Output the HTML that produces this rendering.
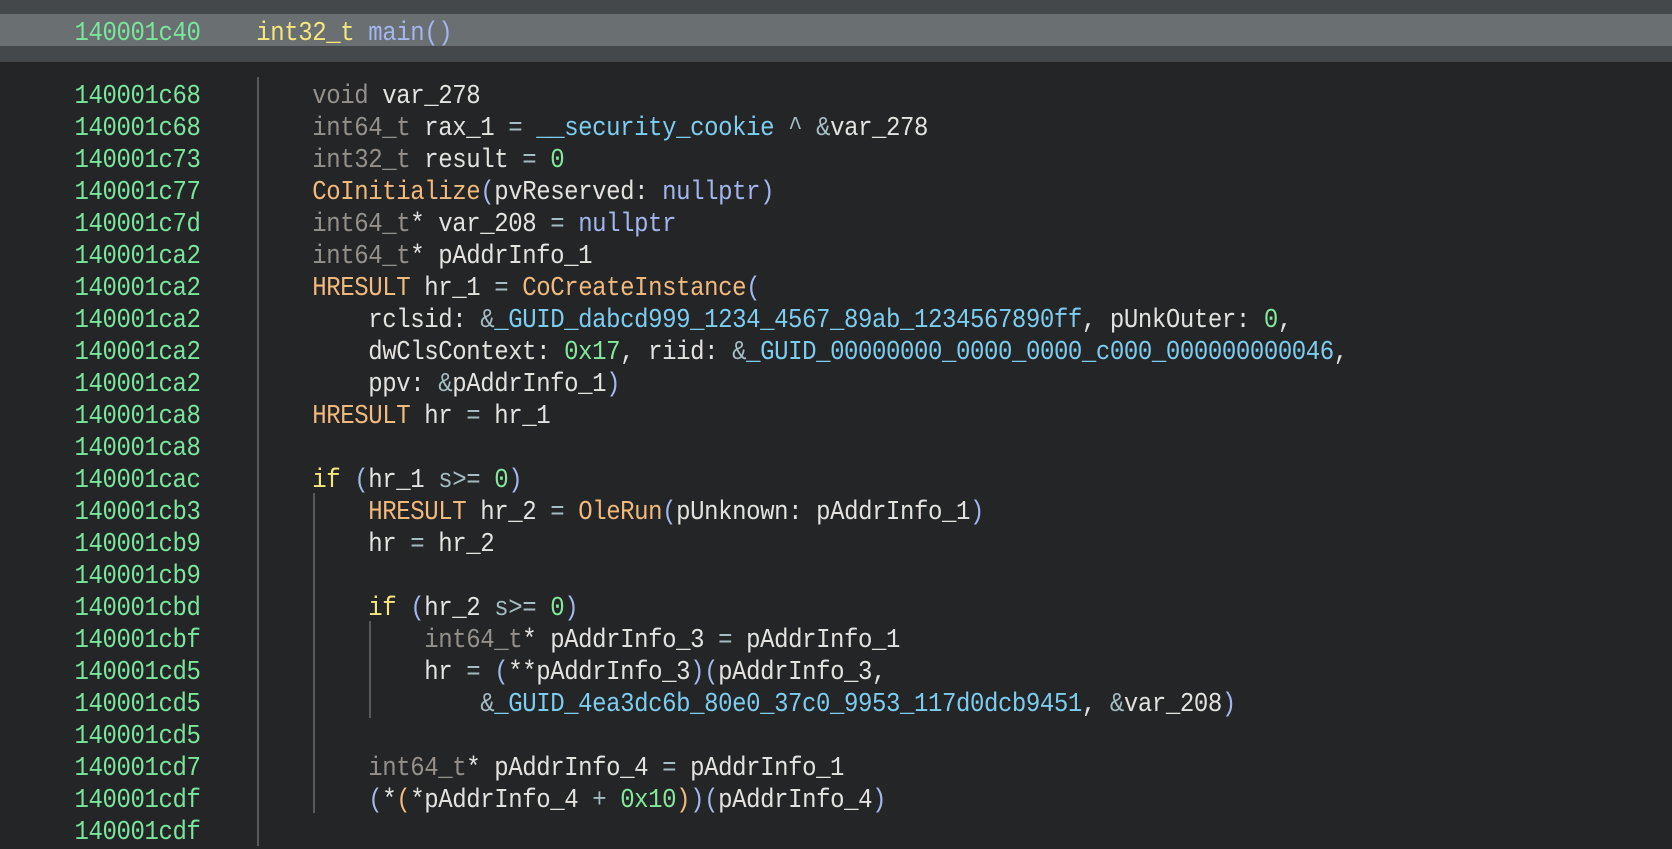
<!DOCTYPE html>
<html><head><meta charset="utf-8">
<style>
html,body{margin:0;padding:0;background:#232527;width:1672px;height:846px;overflow:hidden}
#top{position:absolute;left:0;top:0;width:1672px;height:62px;background:#44484a}
#hl{position:absolute;left:0;top:14px;width:1672px;height:32px;background:#6a6f72}
.v{position:absolute;width:2px;background:#58595b}
pre{position:absolute;margin:0;font:24px/29px "Liberation Mono",monospace;letter-spacing:-.41px;white-space:pre;color:#e4e2de;transform:scaleY(1.10345);transform-origin:0 0}
#a{left:74.5px;top:80.5px;color:#7ae69b}
#c{left:312.3px;top:80.5px}
i{font-style:normal}
.t{color:#96908a}.o{color:#f2b97c}.s{color:#7dcdf0}.n{color:#a3b6ee}.d{color:#84e89c}.p{color:#a4bcc2}.y{color:#f5e67e}
</style></head><body>
<div id="top"></div><div id="hl"></div>
<pre style="left:74.5px;top:17.5px;color:#7ae69b">140001c40</pre>
<pre style="left:256.3px;top:17.5px"><i class="y">int32_t</i> <i class="n">main()</i></pre>
<div class="v" style="left:257px;top:77px;height:769px"></div>
<div class="v" style="left:313px;top:493px;height:320px"></div>
<div class="v" style="left:369px;top:621px;height:97px"></div>
<pre id="a">140001c68
140001c68
140001c73
140001c77
140001c7d
140001ca2
140001ca2
140001ca2
140001ca2
140001ca2
140001ca8
140001ca8
140001cac
140001cb3
140001cb9
140001cb9
140001cbd
140001cbf
140001cd5
140001cd5
140001cd5
140001cd7
140001cdf
140001cdf</pre>
<pre id="c"><i class="t">void</i> var_278
<i class="t">int64_t</i> rax_1 <i class="p">=</i> <i class="s">__security_cookie</i> <i class="p">^</i> <i class="p">&amp;</i>var_278
<i class="t">int32_t</i> result <i class="p">=</i> <i class="d">0</i>
<i class="o">CoInitialize</i><i class="n">(</i>pvReserved: <i class="n">nullptr)</i>
<i class="t">int64_t</i>* var_208 <i class="p">=</i> <i class="n">nullptr</i>
<i class="t">int64_t</i>* pAddrInfo_1
<i class="o">HRESULT</i> hr_1 <i class="p">=</i> <i class="o">CoCreateInstance</i><i class="n">(</i>
    rclsid: <i class="p">&amp;</i><i class="s">_GUID_dabcd999_1234_4567_89ab_1234567890ff</i>, pUnkOuter: <i class="d">0</i>,
    dwClsContext: <i class="d">0x17</i>, riid: <i class="p">&amp;</i><i class="s">_GUID_00000000_0000_0000_c000_000000000046</i>,
    ppv: <i class="p">&amp;</i>pAddrInfo_1<i class="n">)</i>
<i class="o">HRESULT</i> hr <i class="p">=</i> hr_1

<i class="y">if</i> <i class="n">(</i>hr_1 <i class="p">s&gt;=</i> <i class="d">0</i><i class="n">)</i>
    <i class="o">HRESULT</i> hr_2 <i class="p">=</i> <i class="o">OleRun</i><i class="n">(</i>pUnknown: pAddrInfo_1<i class="n">)</i>
    hr <i class="p">=</i> hr_2

    <i class="y">if</i> <i class="n">(</i>hr_2 <i class="p">s&gt;=</i> <i class="d">0</i><i class="n">)</i>
        <i class="t">int64_t</i>* pAddrInfo_3 <i class="p">=</i> pAddrInfo_1
        hr <i class="p">=</i> <i class="n">(</i>**pAddrInfo_3<i class="n">)(</i>pAddrInfo_3,
            <i class="p">&amp;</i><i class="s">_GUID_4ea3dc6b_80e0_37c0_9953_117d0dcb9451</i>, <i class="p">&amp;</i>var_208<i class="n">)</i>

    <i class="t">int64_t</i>* pAddrInfo_4 <i class="p">=</i> pAddrInfo_1
    <i class="n">(</i>*<i class="o">(</i>*pAddrInfo_4 <i class="p">+</i> <i class="d">0x10</i><i class="o">)</i><i class="n">)(</i>pAddrInfo_4<i class="n">)</i>
</pre>
</body></html>
